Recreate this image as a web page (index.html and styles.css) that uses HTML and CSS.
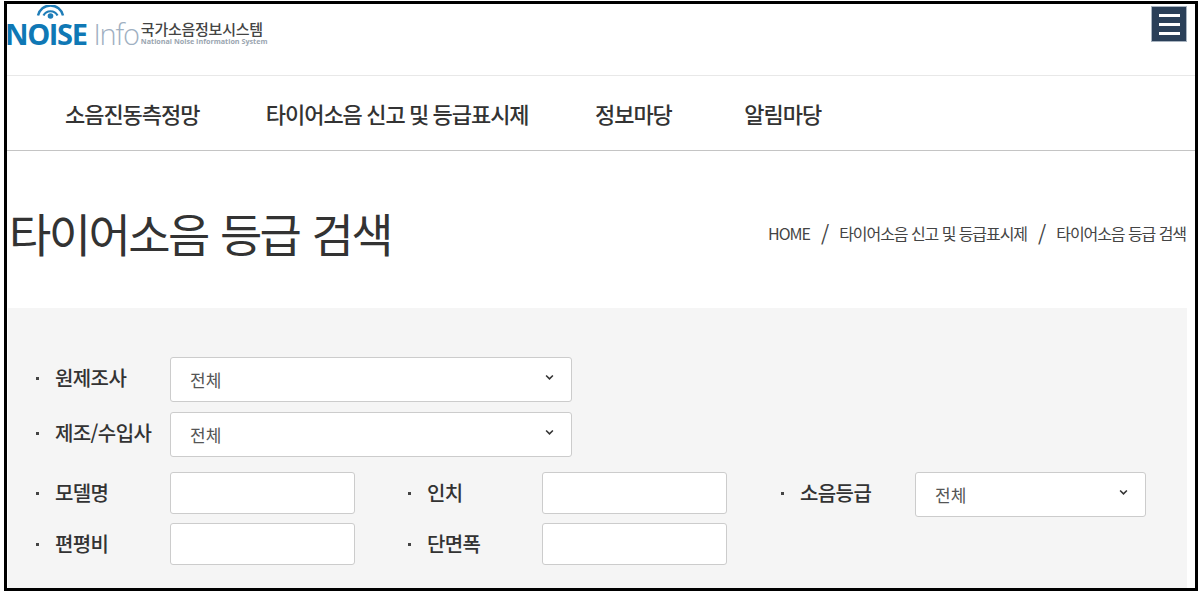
FILE: index.html
```html
<!DOCTYPE html>
<html lang="ko">
<head>
<meta charset="utf-8">
<title>타이어소음 등급 검색</title>
<link rel="stylesheet" href="styles.css">
</head>
<body>
<div class="frame">
  <header class="top">
    <a class="logo">
      <svg class="wifi" width="30" height="16" viewBox="0 0 30 16" aria-hidden="true">
        <circle cx="14.5" cy="11" r="2.8" fill="#1f7db8"/>
        <path d="M7.5 10.5A7.9 7.9 0 0 1 21.5 10.5" fill="none" stroke="#1f7db8" stroke-width="2.2"/>
        <path d="M2 10.5A12.8 12.8 0 0 1 27 10.5" fill="none" stroke="#1f7db8" stroke-width="2.4"/>
      </svg>
      <span class="noise">NOISE</span><span class="info">Info</span>
      <span class="sys"><b>국가소음정보시스템</b><small>National Noise Information System</small></span>
    </a>
    <button class="burger" aria-label="메뉴"><i></i><i></i><i></i></button>
  </header>
  <nav class="gnb">
    <a>소음진동측정망</a><a>타이어소음 신고 및 등급표시제</a><a>정보마당</a><a class="last">알림마당</a>
  </nav>
  <section class="head">
    <h1>타이어소음 등급 검색</h1>
    <div class="crumb"><span class="home">HOME</span><em>/</em><span>타이어소음 신고 및 등급표시제</span><em>/</em><span>타이어소음 등급 검색</span></div>
  </section>
  <form class="panel">
    <div class="row r1">
      <label class="lbl">원제조사</label>
      <div class="sel wide"><select><option>전체</option></select><svg viewBox="0 0 8 6" aria-hidden="true"><path d="M1 1.2 4 4.2 7 1.2" fill="none" stroke="#333" stroke-width="1.4"/></svg></div>
    </div>
    <div class="row r2">
      <label class="lbl">제조/수입사</label>
      <div class="sel wide"><select><option>전체</option></select><svg viewBox="0 0 8 6" aria-hidden="true"><path d="M1 1.2 4 4.2 7 1.2" fill="none" stroke="#333" stroke-width="1.4"/></svg></div>
    </div>
    <div class="row r3">
      <label class="lbl">모델명</label><input class="txt" type="text">
      <label class="lbl alt">인치</label><input class="txt" type="text">
      <label class="lbl alt">소음등급</label>
      <div class="sel narrow"><select><option>전체</option></select><svg viewBox="0 0 8 6" aria-hidden="true"><path d="M1 1.2 4 4.2 7 1.2" fill="none" stroke="#333" stroke-width="1.4"/></svg></div>
    </div>
    <div class="row r4">
      <label class="lbl">편평비</label><input class="txt" type="text">
      <label class="lbl alt">단면폭</label><input class="txt" type="text">
    </div>
  </form>
</div>
</body>
</html>
```
FILE: styles.css
```css
* { box-sizing: border-box; }
html, body { margin: 0; padding: 0; background: #fff; }
body { width: 1201px; height: 593px; overflow: hidden; padding: 1px 3px 2px 4px;
  font-family: "Noto Sans CJK KR", "Noto Sans", sans-serif; color: #333; }
.frame { width: 1194px; height: 590px; border: 3px solid #000; overflow: hidden; }

.top { height: 72px; border-bottom: 1px solid #e8e8e8; display: flex; justify-content: space-between; align-items: flex-start; padding: 2px 8px 0 0; }
.logo { position: relative; display: flex; align-items: flex-start; margin-left: -2px; padding-top: 10px; }
.wifi { position: absolute; left: 31px; top: -1px; }
.noise { font: 700 29px/36px "Open Sans", sans-serif; color: #0f78b5; letter-spacing: -1.4px; }
.info { font: 300 29px/36px "Open Sans", sans-serif; color: #9fb0c2; margin-left: 7px; letter-spacing: -1.2px; }
.sys { display: flex; flex-direction: column; margin: 4px 0 0 2px; }
.sys b { font-weight: 500; font-size: 15px; line-height: 17px; color: #444; letter-spacing: -.25px; white-space: nowrap; }
.sys small { font: 700 7.2px/8px "Open Sans", sans-serif; color: #9aa5b0; white-space: nowrap; }
.burger { width: 36px; height: 36px; background: #2a3f58; border: 1px solid #a9b4c0; padding: 0; display: flex; flex-direction: column; justify-content: center; gap: 6px; align-items: center; }
.burger i { display: block; width: 21px; height: 3px; background: #fff; }

.gnb { height: 75px; border-bottom: 1px solid #c4c4c4; display: flex; align-items: center; gap: 66.5px; padding: 0 0 0 58px; }
.gnb a { font-size: 22px; font-weight: 500; letter-spacing: -1.05px; word-spacing: -.7px; color: #333; white-space: nowrap; }
.gnb .last { margin-left: 6px; }

.head { height: 157px; display: flex; justify-content: space-between; align-items: flex-start; padding: 0 9px 0 2px; }
.head h1 { margin: 46px 0 0; font-size: 46px; font-weight: 400; line-height: 70px; letter-spacing: -2.6px; word-spacing: 2px; color: #333; white-space: nowrap; }
.crumb { margin-top: 70px; display: flex; align-items: center; font-size: 16px; line-height: 24px; letter-spacing: -1.06px; color: #444; white-space: nowrap; }
.crumb em { font-style: normal; font-size: 21px; margin: 0 11px; font-weight: 400; }
.crumb .home { letter-spacing: -1px; }

.panel { width: 1179px; height: 280px; margin-left: 1px; background: #f5f5f5; padding: 49px 0 0 25px; }
.row { display: flex; align-items: flex-start; }
.r2 { margin-top: 10px; }
.r3 { margin-top: 15px; }
.r4 { margin-top: 6px; }
.lbl { position: relative; width: 137px; padding-left: 22px; font-size: 20px; font-weight: 500; line-height: 41px; letter-spacing: -.6px; color: #333; white-space: nowrap; }
.lbl::before { content: ""; position: absolute; left: 3px; top: 20px; width: 3px; height: 3px; background: #444; }
.lbl.alt { width: 134px; margin-left: 53px; padding-left: 19px; }
.lbl.alt::before { left: 0; }
.lbl.alt + .txt + .lbl.alt { margin-left: 54px; }
.sel { position: relative; height: 45px; }
.sel.wide { width: 402px; }
.sel.narrow { width: 231px; }
.sel select { appearance: none; -webkit-appearance: none; width: 100%; height: 100%; background: #fff; border: 1px solid #ccc; border-radius: 3px; padding: 0 0 0 19px; font: 400 17px "Noto Sans CJK KR", sans-serif; color: #555; }
.sel svg { position: absolute; right: 18px; top: 17px; width: 9px; height: 7px; pointer-events: none; }
.txt { width: 185px; height: 42px; background: #fff; border: 1px solid #ccc; border-radius: 3px; }
```
